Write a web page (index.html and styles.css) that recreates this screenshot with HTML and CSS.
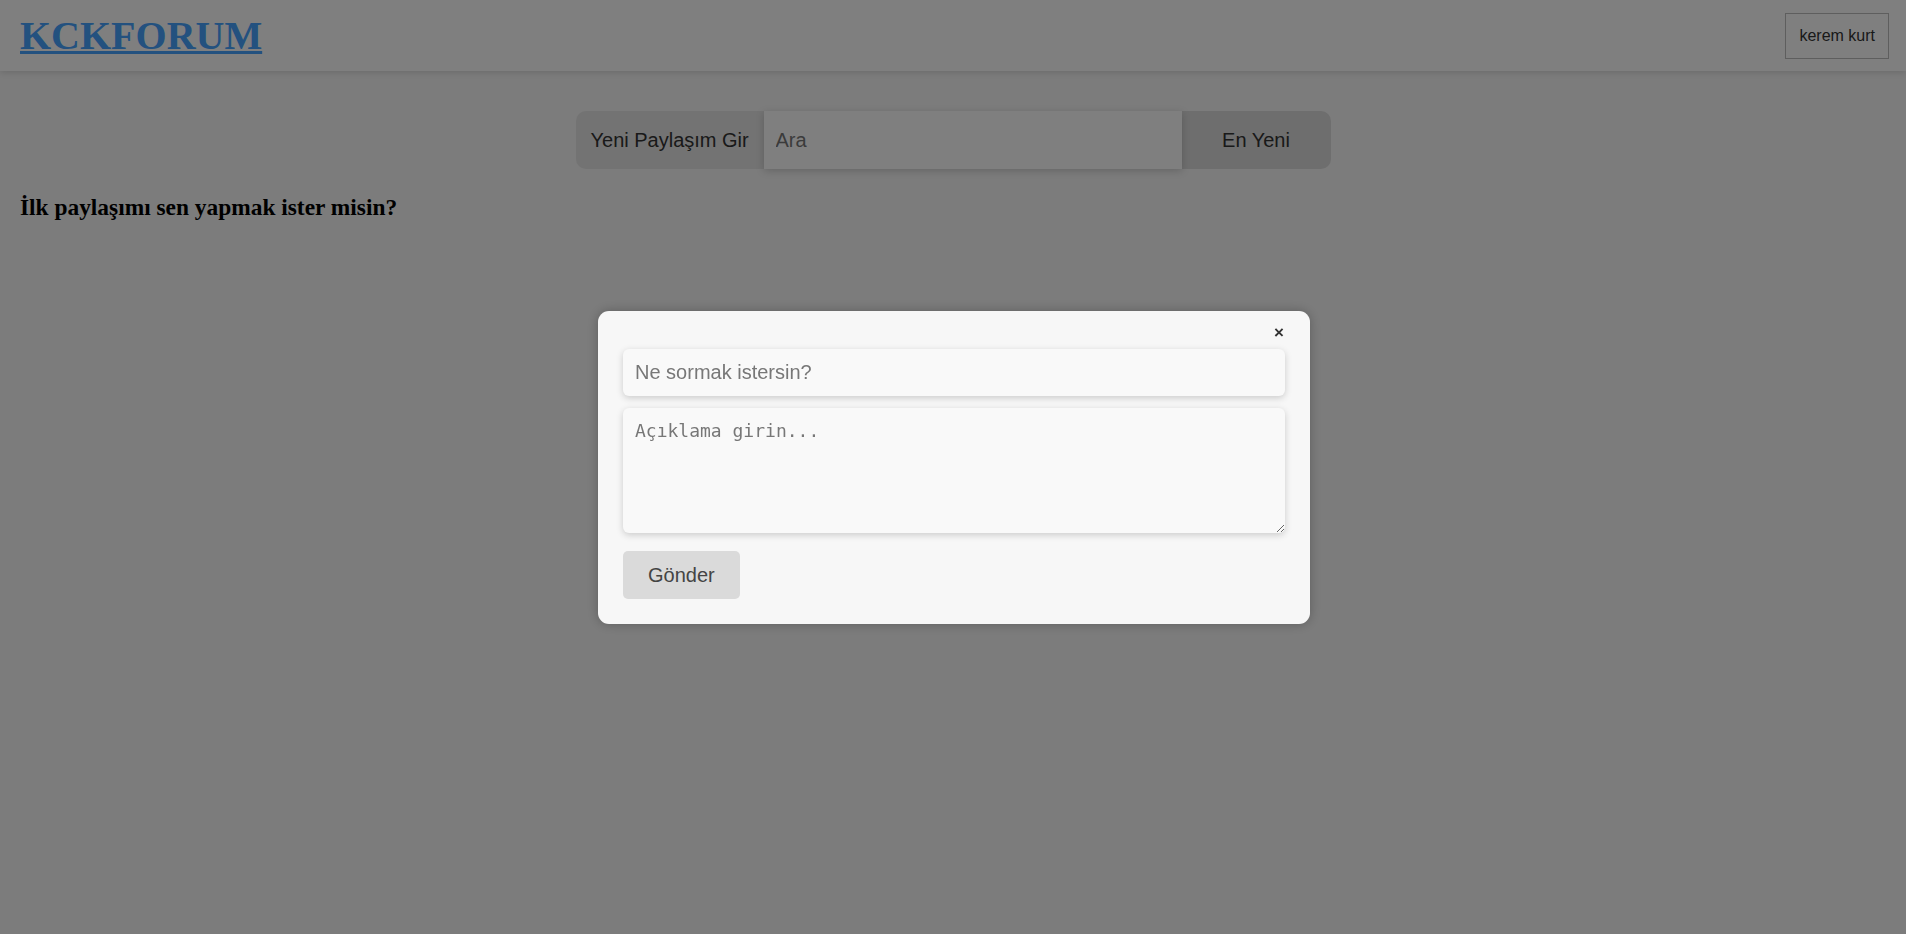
FILE: index.html
```html
<!DOCTYPE html>
<html lang="tr">
<head>
<meta charset="utf-8">
<title>KCKFORUM</title>
<link rel="stylesheet" href="styles.css">
</head>
<body>
<header class="topbar">
  <h1 class="brand"><a href="#" class="brand-link">KCKFORUM</a></h1>
  <button class="user-btn">kerem kurt</button>
</header>
<main class="content">
  <div class="searchbar">
    <div class="new-post">Yeni Paylaşım Gir</div>
    <input class="search-input" type="text" placeholder="Ara">
    <button class="sort-btn">En Yeni</button>
  </div>
  <h3 class="empty-msg">İlk paylaşımı sen yapmak ister misin?</h3>
</main>
<div class="overlay">
  <div class="modal">
    <div class="modal-top"><span class="close">×</span></div>
    <input class="field" type="text" placeholder="Ne sormak istersin?">
    <textarea class="field area" placeholder="Açıklama girin..."></textarea>
    <button class="send-btn">Gönder</button>
  </div>
</div>
</body>
</html>
```
FILE: styles.css
```css
* { box-sizing: border-box; }
html, body { margin: 0; padding: 0; }
body {
  background: #f8f8f8;
  font-family: "Liberation Serif", serif;
  height: 934px;
}
.topbar {
  height: 71px;
  background: #ffffff;
  display: flex;
  align-items: center;
  justify-content: space-between;
  padding: 0 17px 0 20px;
  box-shadow: 0 2px 6px rgba(0,0,0,0.12);
  position: relative;
}
.brand {
  margin: 0;
  font-size: 40px;
  font-weight: bold;
  line-height: 1;
  font-family: "Liberation Serif", serif;
}
.brand-link {
  color: #46a3ff;
  text-decoration: underline;
  text-decoration-thickness: 3px;
}
.user-btn {
  font-family: "Liberation Sans", sans-serif;
  font-size: 16px;
  line-height: 18px;
  padding: 13px 13px;
  background: transparent;
  border: 1px solid #bdbdbd;
  color: #333;
}
.content {
  padding: 0 20px;
}
.searchbar {
  width: 755px;
  height: 58px;
  margin: 40px auto 0;
  display: flex;
  font-family: "Liberation Sans", sans-serif;
  font-size: 20px;
}
.new-post {
  display: flex;
  align-items: center;
  padding: 0 15px;
  background: #e6e6e6;
  border-radius: 10px 0 0 10px;
  color: #333;
  width: 188px;
  white-space: nowrap;
}
.search-input {
  width: 418px;
  height: 58px;
  border: none;
  background: #ffffff;
  padding: 0 12px;
  font-family: "Liberation Sans", sans-serif;
  font-size: 20px;
  box-shadow: 0 2px 8px rgba(0,0,0,0.18);
  outline: none;
  position: relative;
}
.search-input::placeholder { color: #777; }
.sort-btn {
  width: 149px;
  border: none;
  background: #dcdcdc;
  border-radius: 0 10px 10px 0;
  font-family: "Liberation Sans", sans-serif;
  font-size: 20px;
  color: #333;
}
.empty-msg {
  margin: 25px 0 0;
  font-size: 23.4px;
  font-weight: bold;
  color: #000;
}
.overlay {
  position: fixed;
  inset: 0;
  background: rgba(0,0,0,0.5);
  display: flex;
  align-items: center;
  justify-content: center;
  padding-left: 2px;
}
.modal {
  width: 712px;
  background: #f7f7f7;
  border-radius: 11px;
  padding: 12px 25px 25px;
  display: flex;
  flex-direction: column;
  align-items: flex-start;
  box-shadow: 0 0 12px rgba(0,0,0,0.25);
}
.modal-top {
  width: 100%;
  height: 20px;
  display: flex;
  justify-content: flex-end;
  align-items: center;
  padding-right: 1px;
}
.close {
  font-family: "Liberation Sans", sans-serif;
  font-size: 17px;
  font-weight: bold;
  color: #333;
  line-height: 20px;
}
.field {
  width: 100%;
  border: none;
  background: #f9f9f9;
  border-radius: 6px;
  box-shadow: 0 2px 7px rgba(0,0,0,0.18);
  outline: none;
}
input.field {
  margin-top: 6px;
  height: 47px;
  padding: 0 12px;
  font-family: "Liberation Sans", sans-serif;
  font-size: 20px;
}
.field::placeholder { color: #777; }
.area {
  margin-top: 12px;
  height: 125px;
  padding: 12px;
  font-family: "DejaVu Sans Mono", monospace;
  font-size: 18px;
  resize: vertical;
}
.send-btn {
  margin-top: 18px;
  padding: 12px 25px;
  line-height: 24px;
  font-family: "Liberation Sans", sans-serif;
  font-size: 20px;
  color: #444;
  background: #dadada;
  border: none;
  border-radius: 5px;
}
```
